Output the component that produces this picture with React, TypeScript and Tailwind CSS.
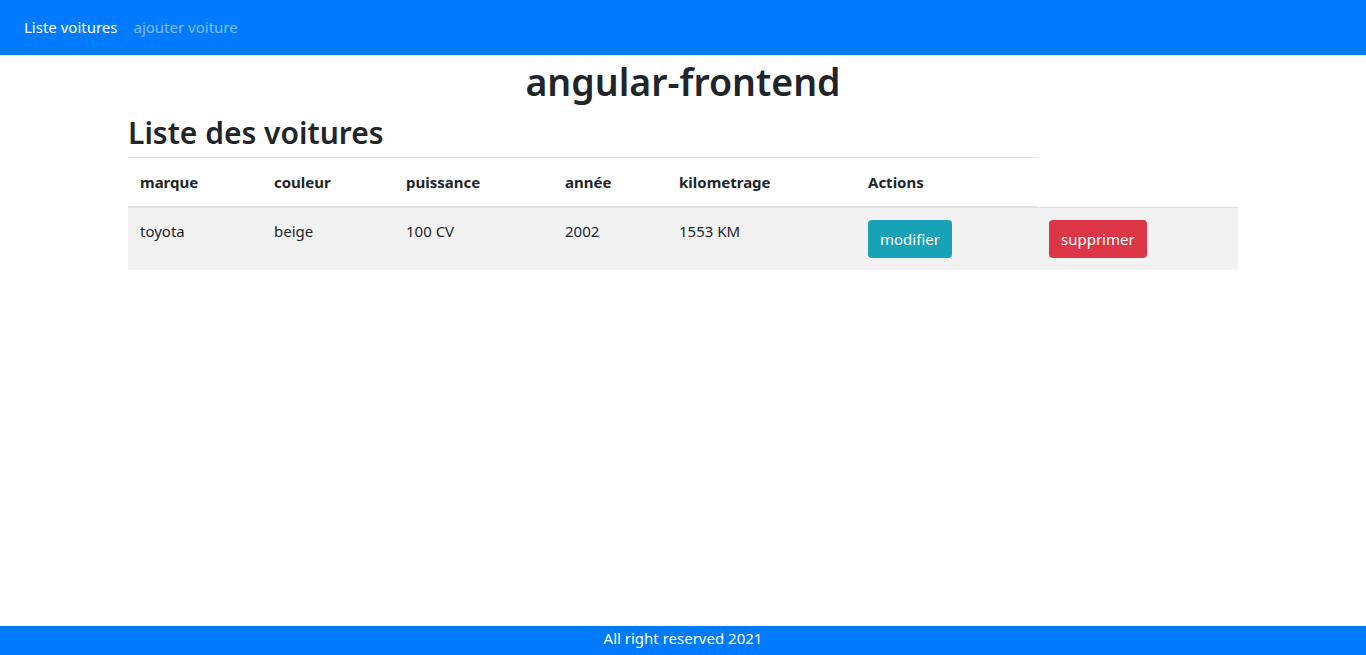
import React from "react";

const cols = [134, 132, 159, 114, 189, 181, 201];

export default function App() {
  return (
    <div
      className="min-h-screen bg-white text-[#212529] text-[15px]"
      style={{ fontFamily: '"Segoe UI", "Noto Sans", "Open Sans", sans-serif' }}
    >
      <nav className="h-[55px] bg-[#007bff] flex items-center px-4 pb-[2px]">
        <a className="px-2 text-white leading-6">Liste voitures</a>
        <a className="px-2 text-white/50 leading-6">ajouter voiture</a>
      </nav>
      <h1 className="text-center text-[37.5px] font-semibold leading-[48px] mt-[3px]">angular-frontend</h1>
      <div className="w-[1110px] mx-auto">
        <h2 className="text-[30px] font-semibold leading-[38px] mt-[8px] mb-[5px]">Liste des voitures</h2>
        <table className="border-collapse table-fixed" style={{ width: 1110 }}>
          <colgroup>
            {cols.map((w, i) => (
              <col key={i} style={{ width: w }} />
            ))}
          </colgroup>
          <thead>
            <tr>
              {["marque", "couleur", "puissance", "année", "kilometrage", "Actions"].map((h) => (
                <th
                  key={h}
                  className="text-left font-bold px-3 pt-3 pb-3 leading-6 border-t border-b-2 border-[#dee2e6] align-bottom"
                >
                  {h}
                </th>
              ))}
            </tr>
          </thead>
          <tbody>
            <tr className="bg-[#f2f2f2]">
              {["toyota", "beige", "100 CV", "2002", "1553 KM"].map((d) => (
                <td key={d} className="px-3 pt-[11px] pb-3 leading-6 align-top border-t border-[#dee2e6]">
                  {d}
                </td>
              ))}
              <td className="px-3 py-3 align-top border-t border-[#dee2e6]">
                <button className="bg-[#17a2b8] text-white rounded px-3 h-[38px] leading-6">modifier</button>
              </td>
              <td className="px-3 py-3 align-top border-t border-[#dee2e6]">
                <button className="bg-[#dc3545] text-white rounded px-3 h-[38px] leading-6">supprimer</button>
              </td>
            </tr>
          </tbody>
        </table>
      </div>
      <footer className="fixed bottom-0 left-0 right-0 h-[29px] bg-[#007bff] text-white text-center leading-[25px]">
        All right reserved 2021
      </footer>
    </div>
  );
}
